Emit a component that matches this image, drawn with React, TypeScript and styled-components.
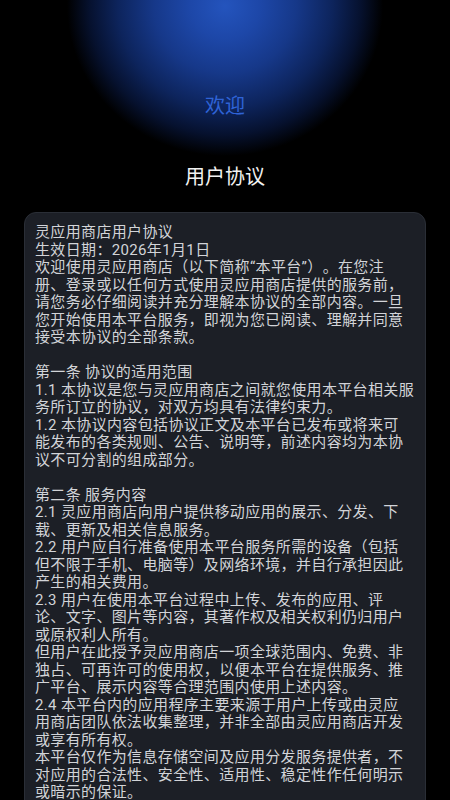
import React from "react";
import styled, { createGlobalStyle } from "styled-components";

const GlobalStyle = createGlobalStyle`
  html, body {
    margin: 0;
    padding: 0;
    background: #000;
  }
  * { box-sizing: border-box; }
`;

const Page = styled.div`
  width: 450px;
  height: 800px;
  overflow: hidden;
  background:
    radial-gradient(ellipse 158px 150px at 225px 6px,
      #2454bd 0%,
      #1d47a8 22%,
      #163889 45%,
      #0d245c 68%,
      #06112e 86%,
      #000 100%),
    #000;
  font-family: Roboto, "Noto Sans CJK SC", sans-serif;
  display: flex;
  flex-direction: column;
`;

const Hero = styled.header`
  display: flex;
  flex-direction: column;
  align-items: center;
  padding-top: 94px;
`;

const Welcome = styled.div`
  font-size: 20px;
  line-height: 24px;
  color: #2f63d6;
`;

const Title = styled.h1`
  margin: 47px 0 0;
  font-size: 20px;
  line-height: 24px;
  font-weight: 400;
  color: #f2f2f2;
`;

const Card = styled.section`
  margin: 23px 24px 0;
  padding: 12px 10px 20px 12px;
  background: #1c1f26;
  border: 1px solid #2a2e36;
  border-radius: 12px;
`;

const Body = styled.div`
  white-space: pre;
  text-spacing-trim: space-all;
  font-size: 15px;
  letter-spacing: 0.35px;
  line-height: 17.5px;
  color: #d2d4d8;
  margin-top: -1px;
  margin-left: -2px;
`;

/* Lines follow the breaks of the reference (Android's optimal line breaker). */
const agreement = [
  "灵应用商店用户协议",
  "生效日期：2026年1月1日",
  "欢迎使用灵应用商店（以下简称“本平台”）。在您注",
  "册、登录或以任何方式使用灵应用商店提供的服务前，",
  "请您务必仔细阅读并充分理解本协议的全部内容。一旦",
  "您开始使用本平台服务，即视为您已阅读、理解并同意",
  "接受本协议的全部条款。",
  "",
  "第一条 协议的适用范围",
  "1.1 本协议是您与灵应用商店之间就您使用本平台相关服",
  "务所订立的协议，对双方均具有法律约束力。",
  "1.2 本协议内容包括协议正文及本平台已发布或将来可",
  "能发布的各类规则、公告、说明等，前述内容均为本协",
  "议不可分割的组成部分。",
  "",
  "第二条 服务内容",
  "2.1 灵应用商店向用户提供移动应用的展示、分发、下",
  "载、更新及相关信息服务。",
  "2.2 用户应自行准备使用本平台服务所需的设备（包括",
  "但不限于手机、电脑等）及网络环境，并自行承担因此",
  "产生的相关费用。",
  "2.3 用户在使用本平台过程中上传、发布的应用、评",
  "论、文字、图片等内容，其著作权及相关权利仍归用户",
  "或原权利人所有。",
  "但用户在此授予灵应用商店一项全球范围内、免费、非",
  "独占、可再许可的使用权，以便本平台在提供服务、推",
  "广平台、展示内容等合理范围内使用上述内容。",
  "2.4 本平台内的应用程序主要来源于用户上传或由灵应",
  "用商店团队依法收集整理，并非全部由灵应用商店开发",
  "或享有所有权。",
  "本平台仅作为信息存储空间及应用分发服务提供者，不",
  "对应用的合法性、安全性、适用性、稳定性作任何明示",
  "或暗示的保证。",
  "",
  "第三条 用户账号",
  "3.1 用户在注册账号时应提供真实、准确、完整的信息。",
].join("\n");

export default function App() {
  return (
    <>
      <GlobalStyle />
      <Page>
        <Hero>
          <Welcome>欢迎</Welcome>
          <Title>用户协议</Title>
        </Hero>
        <Card>
          <Body>{agreement}</Body>
        </Card>
      </Page>
    </>
  );
}
